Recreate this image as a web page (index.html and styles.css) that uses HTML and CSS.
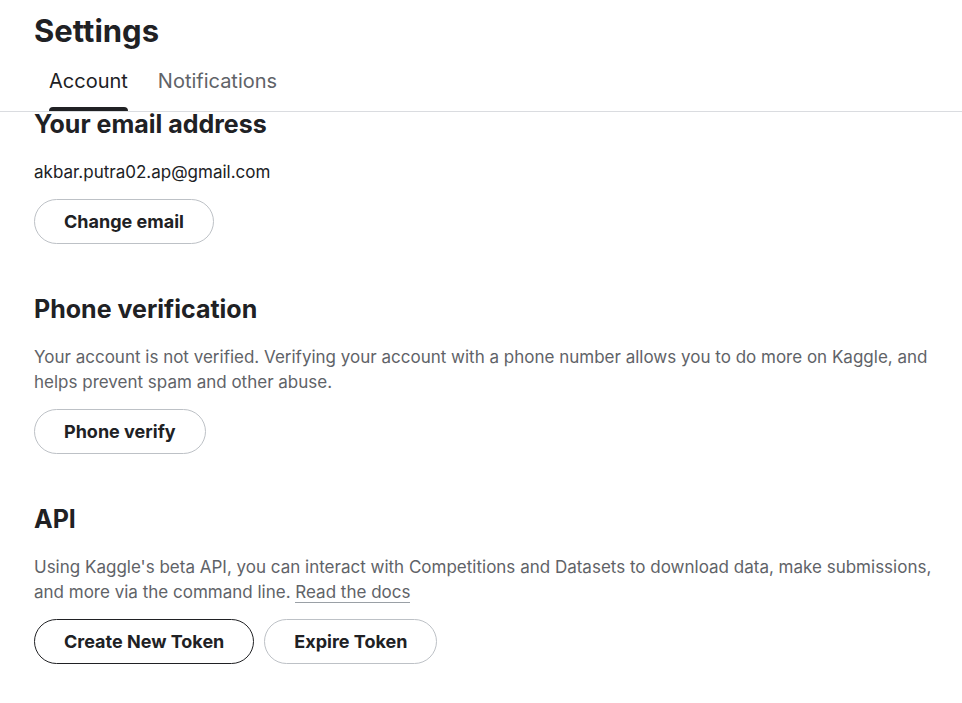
FILE: index.html
```html
<!DOCTYPE html>
<html lang="en">
<head>
<meta charset="utf-8">
<title>Settings</title>
<link rel="stylesheet" href="styles.css">
</head>
<body>
<header class="header">
  <h1 class="title">Settings</h1>
  <nav class="tabs">
    <a class="tab tab-active" href="#account" aria-current="page">Account</a>
    <a class="tab" href="#notifications">Notifications</a>
  </nav>
</header>
<main class="content" id="account">
  <section class="section">
    <h2 class="heading">Your email address</h2>
    <p class="text text-strong">akbar.putra02.ap@gmail.com</p>
    <div class="actions"><button class="button" type="button">Change email</button></div>
  </section>
  <section class="section">
    <h2 class="heading">Phone verification</h2>
    <p class="text">Your account is not verified. Verifying your account with a phone number allows you to do more on Kaggle, and helps prevent spam and other abuse.</p>
    <div class="actions"><button class="button" type="button">Phone verify</button></div>
  </section>
  <section class="section">
    <h2 class="heading">API</h2>
    <p class="text">Using Kaggle's beta API, you can interact with Competitions and Datasets to download data, make submissions, and more via the command line. <a class="link" href="#docs">Read the docs</a></p>
    <div class="actions">
      <button class="button button-primary" type="button">Create New Token</button>
      <button class="button" type="button">Expire Token</button>
    </div>
  </section>
</main>
</body>
</html>
```
FILE: styles.css
```css
* {
  box-sizing: border-box;
}

body {
  margin: 0;
  background: #fff;
  color: #202124;
  font-family: Inter, "Liberation Sans", sans-serif;
}

.header {
  border-bottom: 1px solid #dadce0;
}

.title {
  margin: 0;
  padding: 12px 34px 0;
  font-size: 31px;
  font-weight: 700;
  line-height: 38px;
}

.tabs {
  display: flex;
  gap: 30px;
  padding: 2px 49px 0;
}

.tab {
  height: 59px;
  border-bottom: 4px solid transparent;
  color: #5f6368;
  font-size: 20px;
  line-height: 58px;
  text-decoration: none;
}

.tab-active {
  position: relative;
  color: #202124;
}

.tab-active::after {
  content: "";
  position: absolute;
  right: 0;
  bottom: -4px;
  left: 0;
  height: 4px;
  border-radius: 4px 4px 0 0;
  background: #202124;
}

.content {
  padding: 0 0 0 34px;
}

.section {
  margin-bottom: 53px;
}

.heading {
  margin: 0 0 23px;
  font-size: 25px;
  font-weight: 700;
  line-height: 25px;
}

.text {
  margin: 0 0 14px;
  color: #5f6368;
  font-size: 17px;
  line-height: 25px;
}

.text-strong {
  color: #202124;
}

.actions {
  display: flex;
  gap: 10px;
}

.button {
  height: 45px;
  padding: 0 29px;
  border: 1px solid #bdc1c6;
  border-radius: 23px;
  background: #fff;
  color: #202124;
  font: 700 18px/25px Inter, "Liberation Sans", sans-serif;
}

.button-primary {
  border-color: #202124;
}

.link {
  border-bottom: 1px solid #9aa0a6;
  color: inherit;
  text-decoration: none;
}
```
